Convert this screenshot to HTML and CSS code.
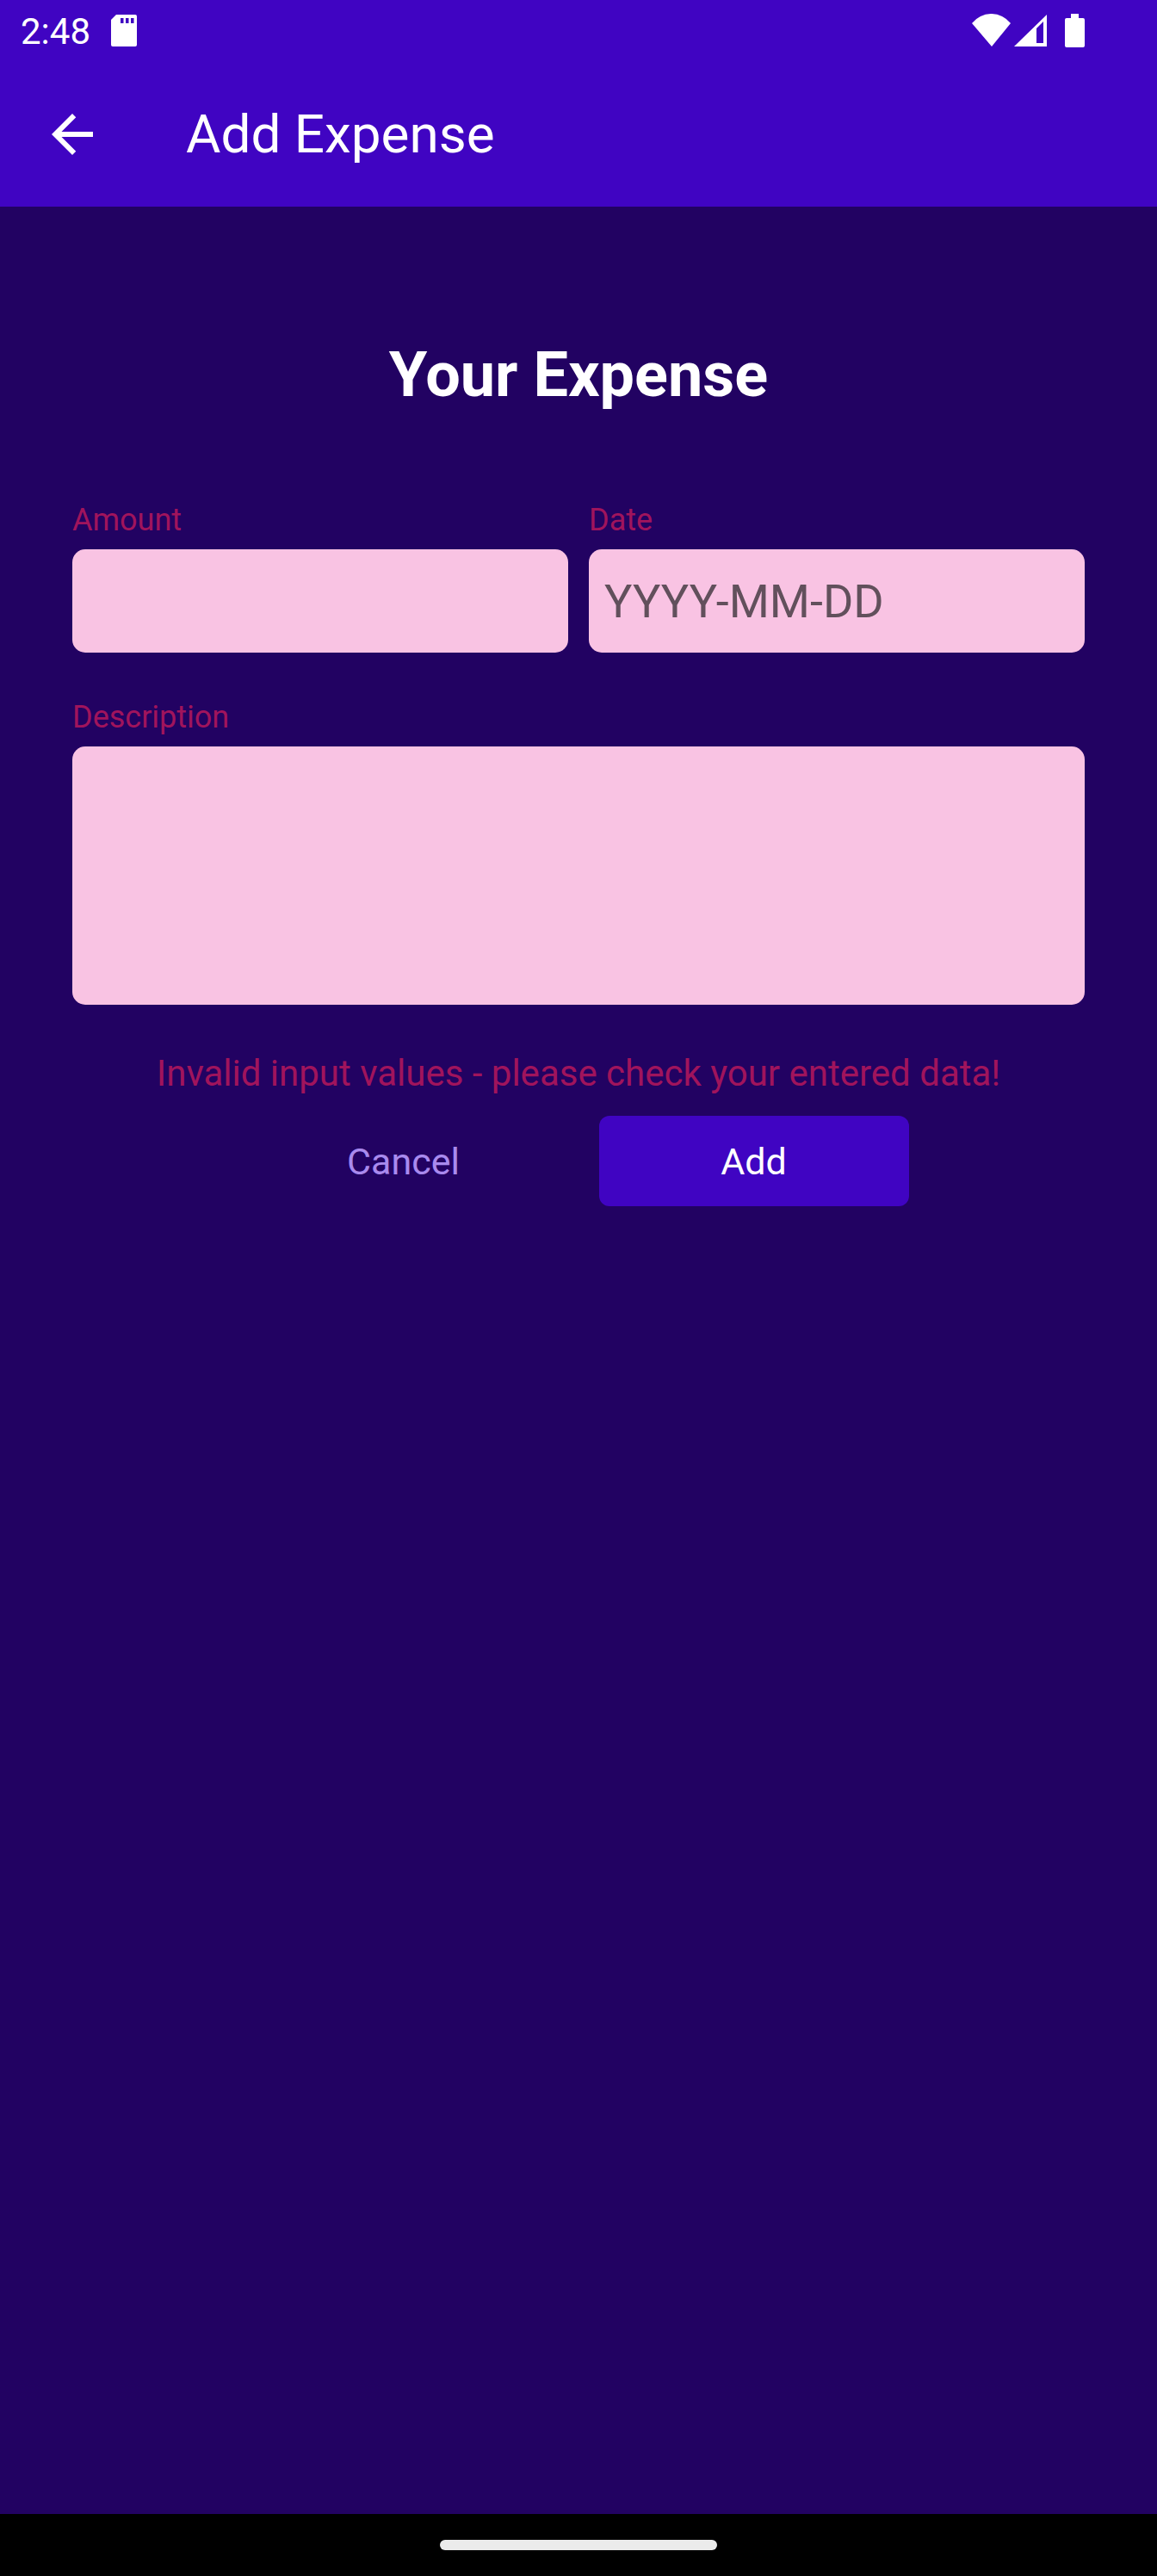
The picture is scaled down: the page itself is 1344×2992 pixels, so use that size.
FILE: index.html
```html
<!DOCTYPE html>
<html lang="en">
<head>
<meta charset="utf-8">
<title>Add Expense</title>
<link rel="stylesheet" href="styles.css">
</head>
<body>
<div class="screen">
  <header class="top">
    <div class="status">
      <span class="time">2:48</span>
      <svg class="sd" width="30" height="37" viewBox="0 0 30 37">
        <path d="M6,0 H28 Q30,0 30,2 V35 Q30,37 28,37 H2 Q0,37 0,35 V6 Z" fill="#fff"/>
        <rect x="11" y="4" width="3.5" height="6" fill="#4004C2"/>
        <rect x="17" y="4" width="3.5" height="6" fill="#4004C2"/>
        <rect x="23" y="4" width="3.5" height="6" fill="#4004C2"/>
      </svg>
      <span class="spacer"></span>
      <svg class="sys" width="131" height="39" viewBox="0 0 131 39">
        <path d="M23,38 L0,11 A28.5,28.5 0 0 1 45,11 Z" fill="#fff"/>
        <path d="M49,38 L87,1 L87,38 Z" fill="#fff"/>
        <path d="M75,17 L83,9 L83,34 L75,34 Z" fill="#4004C2"/>
        <path d="M115,0 H124 V5 H129 Q131,5 131,7 V37 Q131,39 129,39 H110 Q108,39 108,37 V7 Q108,5 110,5 H115 Z" fill="#fff"/>
      </svg>
    </div>
    <div class="appbar">
      <svg class="back" width="72" height="72" viewBox="0 0 24 24">
        <path d="M20 11H7.830l5.590-5.590L12 4l-8 8 8 8 1.410-1.410L7.830 13H20v-2z" fill="#fff"/>
      </svg>
      <h1 class="apptitle">Add Expense</h1>
    </div>
  </header>

  <main class="content">
    <h2 class="heading">Your Expense</h2>
    <div class="row">
      <div class="field">
        <label class="label">Amount</label>
        <div class="input"></div>
      </div>
      <div class="field">
        <label class="label">Date</label>
        <div class="input"><span class="placeholder">YYYY-MM-DD</span></div>
      </div>
    </div>
    <div class="field desc">
      <label class="label">Description</label>
      <div class="input textarea"></div>
    </div>
    <p class="error">Invalid input values - please check your entered data!</p>
    <div class="actions">
      <button class="btn cancel">Cancel</button>
      <button class="btn add">Add</button>
    </div>
  </main>

  <footer class="navbar">
    <div class="handle"></div>
  </footer>
</div>
</body>
</html>
```

FILE: styles.css
```css
* { box-sizing: border-box; }

html, body {
  margin: 0;
  padding: 0;
  overflow: hidden;
}

body {
  font-family: Roboto, "Noto Sans", "Liberation Sans", sans-serif;
  background: #220262;
}

.screen {
  width: 1344px;
  height: 2992px;
  display: flex;
  flex-direction: column;
  overflow: hidden;
}

.top {
  background: #4004C2;
  color: #fff;
}

.status {
  height: 72px;
  display: flex;
  align-items: center;
  padding: 0 84px 0 24px;
}

.time {
  font-size: 42px;
  line-height: 1;
  margin-top: 2px;
}

.sd {
  margin-left: 24px;
  margin-top: -1px;
}

.spacer { flex: 1; }

.sys { margin-top: -2px; }

.appbar {
  height: 168px;
  display: flex;
  align-items: center;
  padding-left: 48px;
}

.apptitle {
  margin: 0 0 0 96px;
  font-size: 62px;
  font-weight: 400;
  line-height: 1.17;
}

.content {
  flex: 1;
  background: #220262;
  padding: 153px 84px 0;
  display: flex;
  flex-direction: column;
}

.heading {
  margin: 0;
  text-align: center;
  color: #fff;
  font-size: 72px;
  font-weight: 700;
  line-height: 86px;
}

.row {
  margin-top: 104px;
  display: grid;
  grid-template-columns: 1fr 1fr;
  gap: 24px;
}

.field {
  display: flex;
  flex-direction: column;
}

.label {
  font-size: 36px;
  line-height: 42px;
  color: #A0145C;
  margin-bottom: 13px;
}

.input {
  height: 120px;
  background: #F9C3E3;
  border-radius: 15px;
  display: flex;
  align-items: center;
  padding-left: 18px;
}

.placeholder {
  font-size: 54px;
  color: #62505C;
}

.desc { margin-top: 54px; }

.textarea { height: 300px; }

.error {
  margin: 55px 0 0;
  text-align: center;
  font-size: 42px;
  line-height: 50px;
  color: #A0145C;
}

.actions {
  margin-top: 24px;
  display: flex;
  justify-content: center;
  gap: 47px;
}

.btn {
  width: 360px;
  height: 105px;
  border: none;
  border-radius: 12px;
  font-family: Roboto, "Noto Sans", "Liberation Sans", sans-serif;
  font-size: 43px;
  padding: 0;
  background: transparent;
}

.cancel { color: #A98AEE; }

.add {
  background: #4004C2;
  color: #fff;
}

.navbar {
  height: 72px;
  background: #000;
  display: flex;
  justify-content: center;
  padding-top: 30px;
}

.handle {
  width: 322px;
  height: 12px;
  border-radius: 6px;
  background: #EBEBEB;
}
```
